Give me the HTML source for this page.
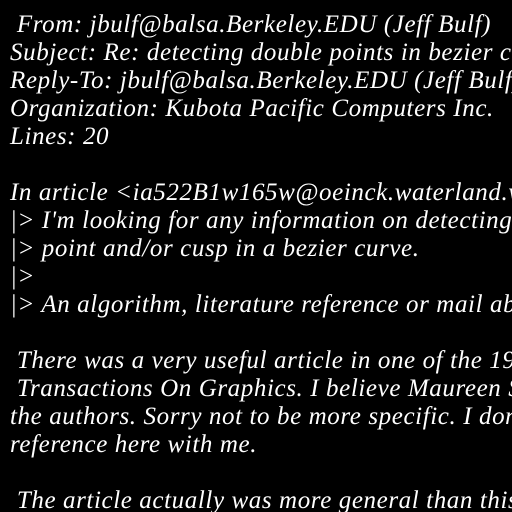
<!DOCTYPE html>
<html><head><style>
html,body{margin:0;padding:0;background:#000;width:512px;height:512px;overflow:hidden}
.w{position:absolute;left:0;top:0;width:512px;height:512px;overflow:hidden}
pre{margin:0;position:absolute;left:10px;top:11px;color:#fff;font-family:"Liberation Serif",serif;font-style:italic;font-size:25px;line-height:28px;letter-spacing:0.6px;white-space:pre}
</style></head><body>
<div class="w"><pre> From: jbulf@balsa.Berkeley.EDU (Jeff Bulf)
Subject: Re: detecting double points in bezier curves
Reply-To: jbulf@balsa.Berkeley.EDU (Jeff Bulf)
Organization: Kubota Pacific Computers Inc.
Lines: 20

In article &lt;ia522B1w165w@oeinck.waterland.wlink.nl&gt;
|&gt; I'm looking for any information on detecting
|&gt; point and/or cusp in a bezier curve.
|&gt;
|&gt; An algorithm, literature reference or mail about

 There was a very useful article in one of the 1989
 Transactions On Graphics. I believe Maureen Stone
the authors. Sorry not to be more specific. I don't
reference here with me.

 The article actually was more general than this</pre></div>
</body></html>
